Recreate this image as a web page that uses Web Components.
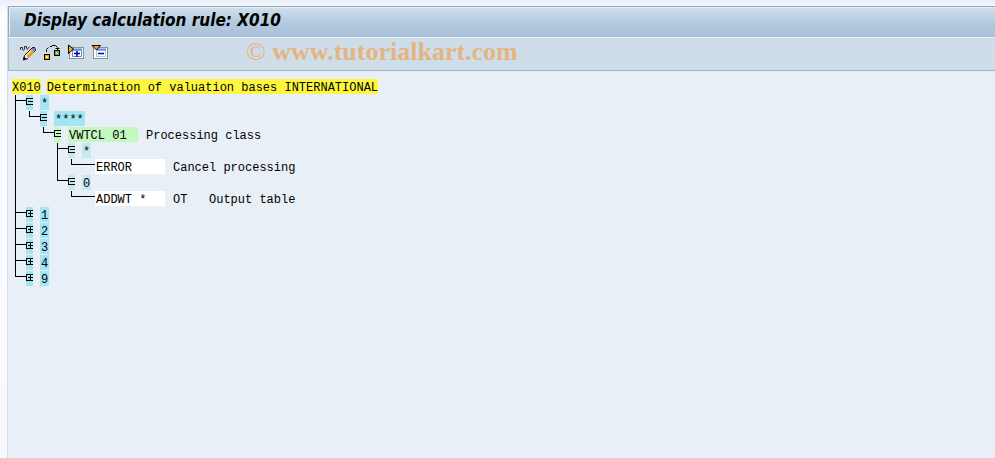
<!DOCTYPE html>
<html lang="en">
<head>
<meta charset="utf-8">
<title>Display calculation rule: X010</title>
<style>
  html, body {
    height: 100%;
    margin: 0;
  }
  body {
    background: linear-gradient(#eaf0f8, #fbfcfe 12px, #f7f9fd);
    color: #000000;
    font: 12px/15px "Liberation Mono", monospace;
  }
  .copy {
    font-weight: normal;
  }
</style>
</head>
<body>

<sap-window>
  <sap-titlebar slot="title">Display calculation rule: X010</sap-titlebar>
  <sap-toolbar slot="toolbar">
    <sap-tool icon="edit" label="Display / Change"></sap-tool>
    <sap-tool icon="objects" label="Other rule"></sap-tool>
    <sap-tool icon="expand" label="Expand subtree"></sap-tool>
    <sap-tool icon="collapse" label="Collapse subtree"></sap-tool>
    <a slot="mark" href="#"><span class="copy">©</span> www.tutorialkart.com</a>
  </sap-toolbar>
  <rule-tree code="X010" label="Determination of valuation bases INTERNATIONAL">
    <rule-node key="*" tone="cyan" open>
      <rule-node key="****" tone="cyan" open>
        <rule-node key="VWTCL 01" tone="green" text="Processing class" open>
          <rule-node key="*" tone="teal" open>
            <rule-node key="ERROR" tone="leaf" text="Cancel processing"></rule-node>
          </rule-node>
          <rule-node key="0" tone="teal" open>
            <rule-node key="ADDWT *" tone="leaf" text="OT   Output table"></rule-node>
          </rule-node>
        </rule-node>
      </rule-node>
    </rule-node>
    <rule-node key="1" tone="cyan"></rule-node>
    <rule-node key="2" tone="cyan"></rule-node>
    <rule-node key="3" tone="cyan"></rule-node>
    <rule-node key="4" tone="cyan"></rule-node>
    <rule-node key="9" tone="cyan"></rule-node>
  </rule-tree>
</sap-window>

<script>
'use strict';

const ICONS = {
  edit: `
    <path d="M1.500 7V4.500H3.500V6.500L4.500 7.500 5.500 6V3.500H7.500V5.500L8.500 6.500 9.500 4.500 10.500 4" fill="none" stroke="#333" />
    <path d="M13.500 4.500h2l1 2v1l-8 8-4 1.500 1-4.500z" fill="#fff" stroke="#000" />
    <path d="M12.500 6l3 3-6 6-2-2z" fill="#f39a35" />
    <path d="M11.500 7l1 1-5 5-1-1z" fill="#ffd9a0" />
    <path d="M13 5h2l1 2-1 1.500-2.500-2.500z" fill="#5a78c8" />
    <path d="M4 17l1-3.500 2.500 2.500z" fill="#000" />`,
  objects: `
    <path d="M3.500 9V6.500L5.500 4.500M7 3.500H9M9 2.500h3.500l2 2V7M12.500 5.500h4" fill="none" stroke="#000" />
    <rect x="1.500" y="11.500" width="5" height="5" fill="#f7a400" stroke="#000" />
    <rect x="3" y="13" width="2" height="2" fill="#ffe08a" />
    <rect x="11.500" y="7.500" width="5" height="5" fill="#7da03a" stroke="#000" />
    <rect x="13" y="9" width="2" height="2" fill="#b9d67a" />`,
  expand: `
    <rect x="2.500" y="4.500" width="14" height="11" fill="#fff" stroke="#8a8f96" />
    <path d="M5.500 13.500V7H14.500V13.500z" fill="#fff" stroke="#5b8fd0" />
    <path d="M5 6.500H15" stroke="#5b8fd0" stroke-width="2" />
    <path d="M7 10.500h6M10 8v6" stroke="#0000a8" stroke-width="1.500" />
    <path d="M1.500 2v8.500l5-4.500z" fill="#f7a020" stroke="#000" />`,
  collapse: `
    <rect x="2.500" y="4.500" width="14" height="11" fill="#fff" stroke="#8a8f96" />
    <path d="M5.500 13.500V7H14.500V13.500z" fill="#fff" stroke="#a9c5ea" />
    <path d="M5 6.500H15" stroke="#5b8fd0" stroke-width="2" />
    <path d="M7 10.500h6" stroke="#0000a8" stroke-width="1.500" />
    <path d="M1 2.500h8.500l-4 4.500z" fill="#f7a020" stroke="#000" />`
};

class BaseElement extends HTMLElement {

  constructor() {
    super();
    const template = this.createTemplate();
    this._sR = this.attachShadow({ mode: 'open' });
    this._sR.appendChild(template.content.cloneNode(true));
  }

  createTemplate() {
    const template = document.createElement('template');
    template.innerHTML = this.constructor.markup;
    return template;
  }

}

window.customElements.define('sap-window', class Window extends BaseElement {

  static get markup() {
    return `
      <style>
        :host {
          display: flex;
          box-sizing: border-box;
          min-height: 100%;
          padding: 6px 0 0 8px;
        }
        .frame {
          display: flex;
          flex: 1;
          flex-direction: column;
          background: #e8eff6;
          box-shadow: -1px 0 0 #d5dfeb;
        }
        main {
          flex: 1;
          padding: 8px 4px;
        }
      </style>
      <div class="frame">
        <slot name="title"></slot>
        <slot name="toolbar"></slot>
        <main><slot></slot></main>
      </div>
    `;
  }

});

window.customElements.define('sap-titlebar', class Titlebar extends BaseElement {

  static get markup() {
    return `
      <style>
        :host {
          display: block;
          border: 1px solid #8fa9c2;
          border-width: 1px 0 1px 1px;
          border-bottom-color: #a9bfd6;
          background: linear-gradient(#d0e0ec, #b2cadd 55%, #a9c2da);
          box-shadow: inset 1px 1px 0 #e3edf5;
        }
        h1 {
          margin: 0;
          padding: 2px 15px 5px;
          font: italic bold 17px/22px "DejaVu Sans Condensed", "DejaVu Sans", sans-serif;
        }
      </style>
      <h1><slot></slot></h1>
    `;
  }

});

window.customElements.define('sap-toolbar', class Toolbar extends BaseElement {

  static get markup() {
    return `
      <style>
        :host {
          display: flex;
          align-items: center;
          box-sizing: border-box;
          min-height: 34px;
          padding: 0 10px 4px;
          border-left: 1px solid #a9bfd6;
          border-top: 1px solid #eaf2f8;
          border-bottom: 1px solid #9fb5c9;
          background: #cfdde8;
        }
        .tools {
          display: flex;
          gap: 4px;
        }
        ::slotted(a) {
          margin-left: 135px;
          color: #e3b583;
          font: bold 26px/28px "Liberation Serif", serif;
          text-decoration: none;
        }
      </style>
      <div class="tools" role="toolbar"><slot></slot></div>
      <slot name="mark"></slot>
    `;
  }

});

window.customElements.define('sap-tool', class Tool extends BaseElement {

  static get markup() {
    return `
      <style>
        :host {
          display: block;
        }
        button {
          display: block;
          width: 20px;
          height: 18px;
          padding: 0;
          border: 0;
          background: none;
          cursor: pointer;
        }
        svg {
          display: block;
        }
      </style>
      <button type="button"></button>
    `;
  }

  connectedCallback() {
    const $button = this._sR.querySelector('button');
    $button.title = this.getAttribute('label');
    $button.setAttribute('aria-label', this.getAttribute('label'));
    $button.innerHTML = `
      <svg width="20" height="18" viewBox="0 0 20 18">
        ${ICONS[this.getAttribute('icon')]}
      </svg>
    `;
  }

});

window.customElements.define('rule-tree', class RuleTree extends BaseElement {

  static get markup() {
    return `
      <style>
        :host {
          display: block;
        }
        .root {
          display: flex;
          gap: 6px;
          height: 16px;
          line-height: 19px;
        }
        .root span {
          height: 15px;
          background: #fff73e;
        }
        .children {
          padding-left: 3px;
        }
      </style>
      <div class="root"><span class="code"></span><span class="label"></span></div>
      <div class="children"><slot></slot></div>
    `;
  }

  connectedCallback() {
    this._sR.querySelector('.code').textContent = this.getAttribute('code');
    this._sR.querySelector('.label').textContent = this.getAttribute('label');
  }

});

window.customElements.define('rule-node', class RuleNode extends BaseElement {

  static get observedAttributes() {
    return ['key', 'text', 'open'];
  }

  static get markup() {
    return `
      <style>
        :host {
          --tone: #a4e5f3;
          display: flex;
        }
        :host([tone="green"]) { --tone: #c5f7c1; }
        :host([tone="teal"]) { --tone: #c5e9ee; }
        :host([tone="leaf"]) { --tone: #ffffff; }
        .rail {
          display: flex;
          flex: none;
          flex-direction: column;
          width: 11px;
        }
        .elbow {
          height: 5px;
          border-left: 1px solid #000000;
          border-bottom: 1px solid #000000;
        }
        .stem {
          flex: 1;
          border-left: 1px solid #000000;
        }
        :host(:last-child) .stem {
          border-color: transparent;
        }
        .row {
          display: flex;
          gap: 7px;
          height: 16px;
          line-height: 19px;
        }
        button {
          flex: none;
          width: 7px;
          height: 15px;
          padding: 0;
          border: 0;
          background: var(--tone);
          cursor: pointer;
        }
        button svg {
          display: block;
        }
        :host([open]) .bar {
          display: none;
        }
        .key {
          height: 15px;
          padding: 0 1px;
          background: var(--tone);
        }
        .text {
          padding-left: 1px;
          white-space: pre;
        }
        .children {
          padding-left: 3px;
        }
        :host(:not([open])) .children {
          display: none;
        }
        :host([tone="green"]) .key,
        :host([tone="leaf"]) .key {
          box-sizing: border-box;
          width: 70px;
        }
        :host([tone="leaf"]) .rail {
          width: 24px;
        }
        :host([tone="leaf"]) button {
          display: none;
        }
      </style>
      <div class="rail"><div class="elbow"></div><div class="stem"></div></div>
      <div class="body">
        <div class="row">
          <button type="button">
            <svg width="7" height="15" viewBox="0 0 7 15" shape-rendering="crispEdges">
              <path d="M7 3.500H0.500V9.500H7M2 6.500H7" fill="none" stroke="#000" />
              <path class="bar" d="M4.500 3V10" stroke="#000" />
            </svg>
          </button>
          <span class="key"></span>
          <span class="text"></span>
        </div>
        <div class="children"><slot></slot></div>
      </div>
    `;
  }

  constructor() {
    super();
    this.$button = this._sR.querySelector('button');
    this.$button.addEventListener('click', () => this.toggleAttribute('open'));
  }

  attributeChangedCallback() {
    this.render();
  }

  render() {
    const key = this.getAttribute('key');
    this._sR.querySelector('.key').textContent = key;
    this._sR.querySelector('.text').textContent = this.getAttribute('text');
    this.$button.setAttribute('aria-label', 'Toggle ' + key);
    this.$button.setAttribute('aria-expanded', this.hasAttribute('open'));
  }

});
</script>
</body>
</html>
